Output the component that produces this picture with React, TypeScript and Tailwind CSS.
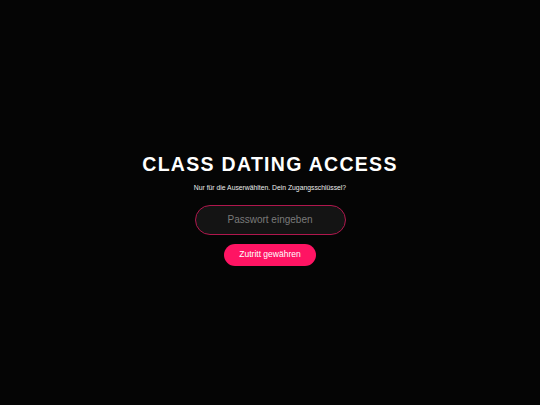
export default function App() {
    return (
        <div
            className="w-[540px] h-[405px] bg-[#050505] flex flex-col items-center justify-center pt-[14px] text-white"
            style={{ fontFamily: '"Liberation Sans", Arial, sans-serif' }}
        >
            <h1 className="mt-[2px] text-[19.5px] font-bold leading-none tracking-[1.3px]">CLASS DATING ACCESS</h1>
            <p className="mt-[10px] text-[6.8px] leading-none text-[#ececec]">
                Nur für die Auserwählten. Dein Zugangsschlüssel?
            </p>
            <input
                type="password"
                placeholder="Passwort eingeben"
                className="mt-[13px] w-[151px] h-[30px] rounded-full border border-[#b0174d] bg-[#141414] text-center text-[10px] text-white placeholder:text-[#7a7a7a] outline-none"
            />
            <button
                type="button"
                className="mt-[9px] w-[92px] h-[22px] rounded-full bg-[#ff1463] text-[8.5px] text-white"
            >
                Zutritt gewähren
            </button>
        </div>
    );
}
